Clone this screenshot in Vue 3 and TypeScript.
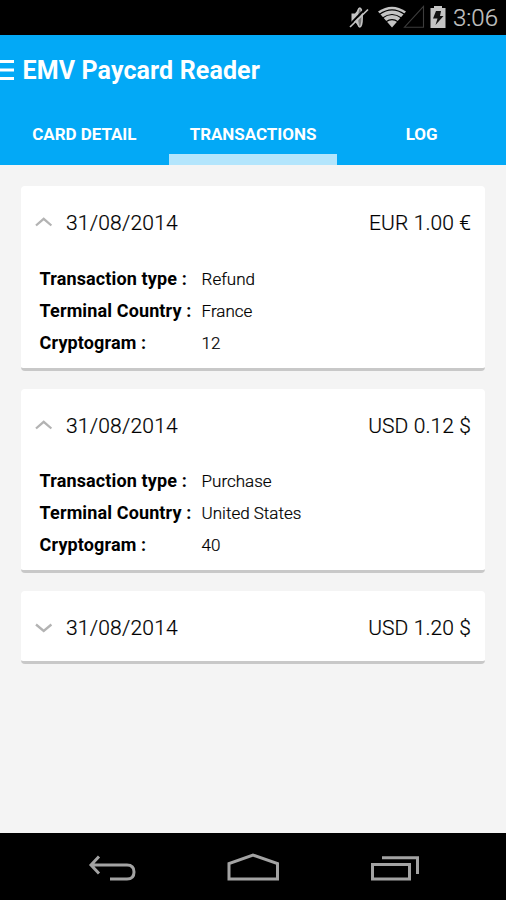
<script setup lang="ts">
interface Field {
  label: string
  value: string
}
interface Transaction {
  date: string
  amount: string
  fields: Field[]
}

const details = (type: string, country: string, cryptogram: string): Field[] => [
  { label: 'Transaction type :', value: type },
  { label: 'Terminal Country :', value: country },
  { label: 'Cryptogram :', value: cryptogram },
]

const transactions: Transaction[] = [
  { date: '31/08/2014', amount: 'EUR 1.00 €', fields: details('Refund', 'France', '12') },
  { date: '31/08/2014', amount: 'USD 0.12 $', fields: details('Purchase', 'United States', '40') },
  { date: '31/08/2014', amount: 'USD 1.20 $', fields: [] },
]

const tabs = [
  { name: 'CARD DETAIL', active: false },
  { name: 'TRANSACTIONS', active: true },
  { name: 'LOG', active: false },
]
</script>

<template>
  <div class="screen">
    <div class="status">
      <svg class="status-icons" width="112" height="35" viewBox="336 0 112 35">
        <path d="M351.500 13.500h3.500l4-5v18l-4-4.500h-3.500z" fill="#c4c4c4" />
        <ellipse cx="359.800" cy="17.500" rx="2.400" ry="9.500" fill="#777" stroke="#c4c4c4" stroke-width="1.500" />
        <path d="M348.500 26L366 8" stroke="#000" stroke-width="2" />
        <path d="M350 27L368 9.500" stroke="#c4c4c4" stroke-width="1.700" />
        <path d="M378 11.500Q392 2 406 11.500L392 27.500Z" fill="#c4c4c4" />
        <path d="M379.500 14.300Q392 5.300 404.500 14.300M382.500 18Q392 11 401.500 18M386 21.800Q392 17.500 398 21.800" fill="none" stroke="#000" stroke-width="1.200" />
        <path d="M404.500 27.200H423.500V6.500Z" fill="none" stroke="#3d3d3d" stroke-width="1.100" />
        <path d="M430.500 8H434V6h8v2h3.500v20h-15z" fill="#c4c4c4" />
        <path d="M436 11h5l-1 5h3.500l-8 9 2-6.500H433z" fill="#111" />
      </svg>
      <span class="clock">3:06</span>
    </div>

    <header class="appbar">
      <div class="titlebar">
        <svg width="14" height="24" viewBox="0 0 14 24">
          <path d="M0 3.500H14M0 12H14M0 20.500H14" stroke="#fff" stroke-width="3.200" />
        </svg>
        <h1 class="title">EMV Paycard Reader</h1>
      </div>
      <nav class="tabs">
        <div v-for="tab in tabs" :key="tab.name" class="tab" :class="{ active: tab.active }">
          <span>{{ tab.name }}</span>
        </div>
      </nav>
    </header>

    <main class="list">
      <section v-for="(item, i) in transactions" :key="i" class="card">
        <div class="card-head" :class="{ closed: !item.fields.length }">
          <svg class="chevron" width="18" height="12" viewBox="0 0 18 12">
            <path :d="item.fields.length ? 'M1 8.500L8.700 1.800L16.400 8.500' : 'M1 2.500L8.700 9L16.400 2.500'" fill="none" stroke="#b3b3b3" stroke-width="2.300" />
          </svg>
          <span class="date">{{ item.date }}</span>
          <span class="amount">{{ item.amount }}</span>
        </div>
        <dl v-if="item.fields.length" class="fields">
          <div v-for="field in item.fields" :key="field.label" class="field">
            <dt>{{ field.label }}</dt>
            <dd>{{ field.value }}</dd>
          </div>
        </dl>
      </section>
    </main>

    <footer class="navbar">
      <svg width="506" height="67" viewBox="0 833 506 67" fill="none" stroke="#a3a3a3" stroke-width="3">
        <path d="M99 856.500L91 865L99 873.500M91 865H127Q134 865 134 872T127 879H110" />
        <path d="M229 879V863.500L253 855L277.500 863.500V879Z" />
        <path d="M372.500 864.500H409.500V879H372.500ZM382 857.700H417.500V874" />
      </svg>
    </footer>
  </div>
</template>

<style>
body {
  margin: 0;
}
</style>

<style scoped>
.screen {
  width: 506px;
  height: 900px;
  display: flex;
  flex-direction: column;
  overflow: hidden;
  background: #f4f4f4;
  font-family: Roboto, sans-serif;
  color: #000;
}
.status {
  height: 35px;
  flex: none;
  display: flex;
  align-items: center;
  justify-content: flex-end;
  padding-right: 8px;
  gap: 5px;
  background: #000;
}
.clock {
  font-size: 24px;
  line-height: 35px;
  color: #c4c4c4;
  font-weight: 300;
  padding-top: 2px;
  -webkit-text-stroke: 0.200px #c4c4c4;
}
.appbar {
  height: 129.500px;
  flex: none;
  background: #03a9f6;
  color: #fff;
}
.titlebar {
  height: 70px;
  display: flex;
  align-items: center;
  gap: 8.500px;
}
.title {
  margin: 0;
  padding-top: 2px;
  font-size: 25px;
  line-height: 30px;
  font-weight: 700;
  letter-spacing: 0.120px;
}
.tabs {
  height: 59.500px;
  display: grid;
  grid-template-columns: repeat(3, 1fr);
}
.tab {
  box-sizing: border-box;
  text-align: center;
  font-size: 17px;
  line-height: 20px;
  font-weight: 700;
  letter-spacing: -0.040px;
  padding-top: 19.400px;
}
.tab.active {
  border-bottom: 11px solid #b3e5fc;
}
.list {
  flex: 1;
  padding: 21.500px 21px 0;
  display: flex;
  flex-direction: column;
  gap: 18px;
}
.card {
  background: #fff;
  border-radius: 4px;
  border-bottom: 3px solid #c8c8c8;
}
.card-head {
  height: 74px;
  display: flex;
  align-items: center;
  padding: 0 14px;
}
.card-head.closed {
  height: 70px;
  box-sizing: border-box;
  padding-top: 4px;
}
.chevron {
  flex: none;
}
.date {
  margin-left: 13px;
}
.date,
.amount {
  font-size: 21px;
  line-height: 24px;
  font-weight: 300;
  letter-spacing: 0.200px;
  -webkit-text-stroke: 0.200px #000;
}
.amount {
  margin-left: auto;
  letter-spacing: 0.100px;
}
.fields {
  margin: 0;
  padding: 2.600px 18.600px 9px;
}
.field {
  height: 32px;
  display: grid;
  grid-template-columns: 162px 1fr;
  align-items: center;
  line-height: 22px;
}
dt {
  font-size: 18px;
  font-weight: 700;
  letter-spacing: 0.130px;
  white-space: nowrap;
}
dd {
  margin: 0;
  font-size: 17px;
  font-weight: 300;
  -webkit-text-stroke: 0.200px #000;
}
.navbar {
  height: 67px;
  flex: none;
  background: #000;
}
.navbar svg {
  display: block;
}
</style>
